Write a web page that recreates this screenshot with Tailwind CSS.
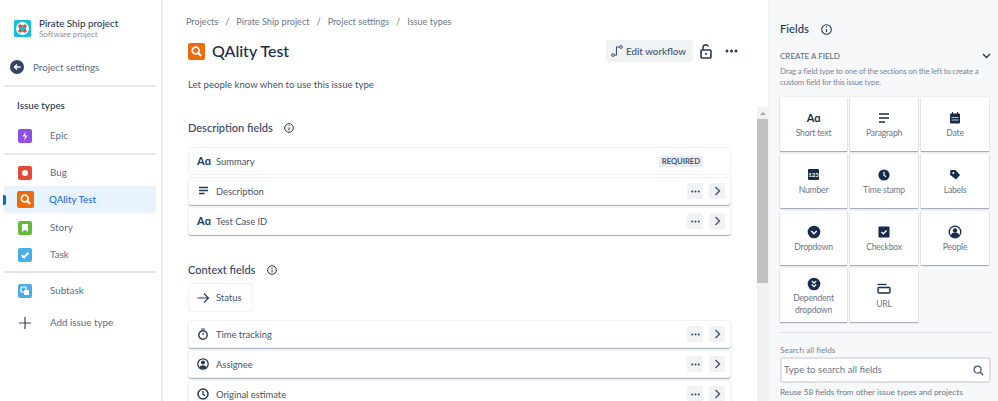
<!DOCTYPE html>
<html lang="en">
  <head>
    <meta charset="UTF-8" />
    <title>QAlity Test - Issue types</title>
    <script src="https://cdn.jsdelivr.net/npm/@tailwindcss/browser@4"></script>
  </head>
  <body class="w-[998px] h-[401px] overflow-hidden bg-white font-['Lato','Noto_Sans',sans-serif] text-[#44546f]">
    <div class="flex h-[401px]">
      <!-- left nav -->
      <nav class="w-[163px] h-full shrink-0 border-r-2 border-[#ebecf0] text-[9.8px] text-[#5e6c84]">
        <div class="flex items-center h-[17px] mt-[20px] pl-[14px] gap-[8px]">
          <svg width="17" height="17" viewBox="0 0 17 17" class="shrink-0">
            <rect width="17" height="17" rx="1.5" fill="#12c2dc" />
            <circle cx="8.5" cy="8.5" r="5" fill="none" stroke="#fff" stroke-width="3" />
            <path d="M5 5l2 2M12 5l-2 2M5 12l2-2M12 12l-2-2" stroke="#e5493a" stroke-width="3" />
          </svg>
          <div>
            <div class="text-[9.8px] leading-[12px] font-medium text-[#253858]">Pirate Ship project</div>
            <div class="text-[8.1px] leading-[11px] text-[#8993a4]">Software project</div>
          </div>
        </div>
        <div class="flex items-center h-[16px] mt-[22px] pl-[10px] gap-[9px]">
          <svg width="14" height="14" viewBox="0 0 14 14" class="shrink-0">
            <circle cx="7" cy="7" r="7" fill="#344563" />
            <path d="M10.5 7H4.5M7 4.5L4.5 7L7 9.5" fill="none" stroke="#fff" stroke-width="1.5" />
          </svg>
          <span>Project settings</span>
        </div>
        <div class="h-[2px] w-[152px] ml-[4px] mt-[10px] bg-[#e4e6ea]"></div>
        <div class="h-[16px] mt-[10px] pl-[17px] leading-[16px] font-medium text-[#253858]">Issue types</div>

        <div class="flex items-center h-[27px] mt-[9px] pl-[18px] gap-[18px]">
          <svg width="14" height="14" viewBox="0 0 14 14" class="shrink-0">
            <rect width="14" height="14" rx="2" fill="#904ee2" />
            <path d="M7.8 2.5L4.5 7.5H7L6.2 11.5L9.5 6.5H7z" fill="#fff" />
          </svg>
          <span>Epic</span>
        </div>
        <div class="h-[2px] w-[152px] ml-[4px] mt-[4px] bg-[#e4e6ea]"></div>

        <div class="flex items-center h-[27px] mt-[4px] pl-[18px] gap-[18px]">
          <svg width="14" height="14" viewBox="0 0 14 14" class="shrink-0">
            <rect width="14" height="14" rx="2" fill="#e5493a" />
            <circle cx="7" cy="7" r="3" fill="#fff" />
          </svg>
          <span>Bug</span>
        </div>
        <div class="relative flex items-center h-[27px] w-[152px] ml-[4px] mb-[1px] pl-[13px] gap-[15px] rounded-[3px] bg-[#e9f2ff] text-[#0c66e4]">
          <span class="absolute left-[-1px] top-[9px] h-[10px] w-[3px] rounded-r-[2px] bg-[#0c66e4]"></span>
          <svg width="17" height="17" viewBox="0 0 17 17" class="shrink-0">
            <rect width="17" height="17" rx="2" fill="#ef6a0b" />
            <circle cx="7.7" cy="7.5" r="3.4" fill="none" stroke="#fff" stroke-width="1.8" />
            <path d="M10.2 10l3 3" stroke="#fff" stroke-width="2" />
          </svg>
          <span>QAlity Test</span>
        </div>
        <div class="flex items-center h-[27px] pl-[18px] gap-[18px]">
          <svg width="14" height="14" viewBox="0 0 14 14" class="shrink-0">
            <rect width="14" height="14" rx="2" fill="#63ba3c" />
            <path d="M4 3h6v8L7 8.8L4 11z" fill="#fff" />
          </svg>
          <span>Story</span>
        </div>
        <div class="flex items-center h-[27px] pl-[18px] gap-[18px]">
          <svg width="14" height="14" viewBox="0 0 14 14" class="shrink-0">
            <rect width="14" height="14" rx="2" fill="#4bade8" />
            <path d="M3.8 7.2L6 9.4L10.4 4.8" fill="none" stroke="#fff" stroke-width="2" />
          </svg>
          <span>Task</span>
        </div>
        <div class="h-[2px] w-[152px] ml-[4px] mt-[3px] bg-[#e4e6ea]"></div>
        <div class="flex items-center h-[27px] mt-[4px] pl-[18px] gap-[18px]">
          <svg width="14" height="14" viewBox="0 0 14 14" class="shrink-0">
            <rect width="14" height="14" rx="2" fill="#4bade8" />
            <rect x="3" y="3" width="5" height="5" rx="0.8" fill="none" stroke="#fff" stroke-width="1.2" />
            <rect x="6" y="6" width="5" height="5" rx="0.8" fill="#fff" />
          </svg>
          <span>Subtask</span>
        </div>
        <div class="flex items-center h-[27px] mt-[5px] pl-[18px] gap-[18px]">
          <svg width="14" height="14" viewBox="0 0 14 14" class="shrink-0">
            <path d="M7 1v12M1 7h12" stroke="#344563" stroke-width="1.2" />
          </svg>
          <span>Add issue type</span>
        </div>
      </nav>

      <!-- main -->
      <main class="w-[594px] shrink-0 h-full overflow-hidden pl-[25px] pr-[26px]">
        <div class="flex items-center gap-[7px] h-[16px] mt-[14px] -ml-[2px] text-[9.1px] text-[#6b778c]">
          <span>Projects</span><span>/</span><span>Pirate Ship project</span><span>/</span><span>Project settings</span><span>/</span><span>Issue types</span>
        </div>
        <div class="flex items-center h-[24px] mt-[9px]">
          <svg width="17" height="17" viewBox="0 0 17 17" class="shrink-0">
            <rect width="17" height="17" rx="2" fill="#ef6a0b" />
            <circle cx="7.7" cy="7.5" r="3.4" fill="none" stroke="#fff" stroke-width="1.8" />
            <path d="M10.2 10l3 3" stroke="#fff" stroke-width="2" />
          </svg>
          <h1 class="ml-[7px] text-[16px] leading-[24px] font-medium text-[#172b4d]">QAlity Test</h1>
          <button class="flex items-center gap-[3px] ml-auto h-[22px] w-[87px] pl-[5px] rounded-[3px] bg-[#f1f2f4] text-[9.8px] font-medium text-[#44546f] whitespace-nowrap">
            <svg width="12" height="12" viewBox="0 0 12 12" class="shrink-0">
              <circle cx="2" cy="10" r="1.4" fill="none" stroke="#44546f" />
              <circle cx="10" cy="2" r="1.4" fill="none" stroke="#44546f" />
              <path d="M3.5 10H5.5V2H8.5" fill="none" stroke="#44546f" stroke-width="1.1" />
            </svg>
            Edit workflow
          </button>
          <svg width="12" height="15" viewBox="0 0 12 15" class="ml-[7px] shrink-0">
            <rect x="1" y="6" width="10" height="8" rx="1" fill="none" stroke="#253858" stroke-width="1.6" />
            <path d="M3 6V3.5a2.8 2.8 0 0 1 5.4-1" fill="none" stroke="#253858" stroke-width="1.5" />
            <circle cx="6" cy="10" r="1.1" fill="#253858" />
          </svg>
          <svg width="13" height="4" viewBox="0 0 13 4" class="ml-[13px] -mr-[7px] shrink-0">
            <circle cx="2" cy="2" r="1.5" fill="#253858" /><circle cx="6.5" cy="2" r="1.5" fill="#253858" /><circle cx="11" cy="2" r="1.5" fill="#253858" />
          </svg>
        </div>
        <p class="h-[16px] mt-[14px] text-[9.6px] leading-[16px] text-[#44546f]">Let people know when to use this issue type</p>

        <div class="flex items-center gap-[11px] h-[16px] mt-[27px] text-[11px] font-medium text-[#344563]">
          Description fields
          <svg width="10" height="10" viewBox="0 0 10 10"><circle cx="5" cy="5" r="4.3" fill="none" stroke="#253858" /><path d="M5 4.5v3M5 2.3v1" stroke="#253858" /></svg>
        </div>
        <div class="flex flex-col gap-[2px] mt-[11px]">
          <div class="flex items-center w-[543px] h-[28px] pl-[8px] pr-[27px] rounded-[3px] border border-[#f1f2f4] text-[9.4px]">
            <span class="w-[19px] text-[11px] font-bold text-[#253858]">Aɑ</span>
            <span class="pt-[2px]">Summary</span>
            <span class="ml-auto px-[3px] rounded-[2px] bg-[#ebecf0] text-[7.6px] leading-[11px] font-bold text-[#44546f]">REQUIRED</span>
          </div>
          <div class="flex items-center w-[543px] h-[28px] pl-[8px] pr-[5px] rounded-[3px] border border-[#f1f2f4] shadow-[0_1px_1px_#a5adba] text-[9.4px]">
            <svg width="12" height="12" viewBox="0 0 12 12" class="mx-[1px] shrink-0"><path d="M1 2.5h9M1 5.5h9M1 8.5h5.5" stroke="#253858" stroke-width="1.4" /></svg>
            <span class="ml-[5px] pt-[2px]">Description</span>
            <span class="flex items-center justify-center ml-auto w-[16px] h-[16px] rounded-[2px] bg-[#f1f2f4]"><svg width="9" height="3" viewBox="0 0 9 3"><circle cx="1.2" cy="1.5" r="1" fill="#344563" /><circle cx="4.5" cy="1.5" r="1" fill="#344563" /><circle cx="7.8" cy="1.5" r="1" fill="#344563" /></svg></span>
            <span class="flex items-center justify-center ml-[6px] w-[16px] h-[16px] rounded-[2px] bg-[#f1f2f4]"><svg width="7" height="10" viewBox="0 0 7 10"><path d="M1.5 1l4 4l-4 4" fill="none" stroke="#44546f" stroke-width="1.4" /></svg></span>
          </div>
          <div class="flex items-center w-[543px] h-[28px] pl-[8px] pr-[5px] rounded-[3px] border border-[#f1f2f4] shadow-[0_1px_1px_#a5adba] text-[9.4px]">
            <span class="w-[19px] text-[11px] font-bold text-[#253858]">Aɑ</span>
            <span class="pt-[2px]">Test Case ID</span>
            <span class="flex items-center justify-center ml-auto w-[16px] h-[16px] rounded-[2px] bg-[#f1f2f4]"><svg width="9" height="3" viewBox="0 0 9 3"><circle cx="1.2" cy="1.5" r="1" fill="#344563" /><circle cx="4.5" cy="1.5" r="1" fill="#344563" /><circle cx="7.8" cy="1.5" r="1" fill="#344563" /></svg></span>
            <span class="flex items-center justify-center ml-[6px] w-[16px] h-[16px] rounded-[2px] bg-[#f1f2f4]"><svg width="7" height="10" viewBox="0 0 7 10"><path d="M1.5 1l4 4l-4 4" fill="none" stroke="#44546f" stroke-width="1.4" /></svg></span>
          </div>
        </div>

        <div class="flex items-center gap-[12px] h-[16px] mt-[27px] text-[11px] font-medium text-[#344563]">
          Context fields
          <svg width="10" height="10" viewBox="0 0 10 10"><circle cx="5" cy="5" r="4.3" fill="none" stroke="#253858" /><path d="M5 4.5v3M5 2.3v1" stroke="#253858" /></svg>
        </div>
        <div class="flex items-center w-[65px] h-[29px] mt-[5px] pl-[8px] rounded-[3px] border border-[#f1f2f4] text-[9.4px]">
          <svg width="13" height="12" viewBox="0 0 13 12" class="shrink-0"><path d="M0.5 6h11M7 1.5L11.5 6L7 10.5" fill="none" stroke="#253858" stroke-width="1.1" /></svg>
          <span class="ml-[6px] pt-[1px]">Status</span>
        </div>
        <div class="flex flex-col gap-[2px] mt-[8px]">
          <div class="flex items-center w-[543px] h-[28px] pl-[8px] pr-[5px] rounded-[3px] border border-[#f1f2f4] shadow-[0_1px_1px_#a5adba] text-[9.4px]">
            <svg width="12" height="12" viewBox="0 0 12 12" class="shrink-0"><circle cx="6" cy="7" r="4.2" fill="none" stroke="#253858" stroke-width="1.4" /><path d="M4.2 1h3.6M6 7V4.8" stroke="#253858" stroke-width="1.2" /></svg>
            <span class="ml-[7px] pt-[2px]">Time tracking</span>
            <span class="flex items-center justify-center ml-auto w-[16px] h-[16px] rounded-[2px] bg-[#f1f2f4]"><svg width="9" height="3" viewBox="0 0 9 3"><circle cx="1.2" cy="1.5" r="1" fill="#344563" /><circle cx="4.5" cy="1.5" r="1" fill="#344563" /><circle cx="7.8" cy="1.5" r="1" fill="#344563" /></svg></span>
            <span class="flex items-center justify-center ml-[6px] w-[16px] h-[16px] rounded-[2px] bg-[#f1f2f4]"><svg width="7" height="10" viewBox="0 0 7 10"><path d="M1.5 1l4 4l-4 4" fill="none" stroke="#44546f" stroke-width="1.4" /></svg></span>
          </div>
          <div class="flex items-center w-[543px] h-[28px] pl-[8px] pr-[5px] rounded-[3px] border border-[#f1f2f4] shadow-[0_1px_1px_#a5adba] text-[9.4px]">
            <svg width="12" height="12" viewBox="0 0 12 12" class="shrink-0"><circle cx="6" cy="6" r="5.2" fill="none" stroke="#253858" stroke-width="1.3" /><circle cx="6" cy="4.6" r="2" fill="#253858" /><path d="M2.5 9.5a3.6 3 0 0 1 7 0a5 5 0 0 1-7 0" fill="#253858" /></svg>
            <span class="ml-[7px] pt-[2px]">Assignee</span>
            <span class="flex items-center justify-center ml-auto w-[16px] h-[16px] rounded-[2px] bg-[#f1f2f4]"><svg width="9" height="3" viewBox="0 0 9 3"><circle cx="1.2" cy="1.5" r="1" fill="#344563" /><circle cx="4.5" cy="1.5" r="1" fill="#344563" /><circle cx="7.8" cy="1.5" r="1" fill="#344563" /></svg></span>
            <span class="flex items-center justify-center ml-[6px] w-[16px] h-[16px] rounded-[2px] bg-[#f1f2f4]"><svg width="7" height="10" viewBox="0 0 7 10"><path d="M1.5 1l4 4l-4 4" fill="none" stroke="#44546f" stroke-width="1.4" /></svg></span>
          </div>
          <div class="flex items-center w-[543px] h-[28px] pl-[8px] pr-[5px] rounded-[3px] border border-[#f1f2f4] shadow-[0_1px_1px_#a5adba] text-[9.4px]">
            <svg width="12" height="12" viewBox="0 0 12 12" class="shrink-0"><circle cx="6" cy="6" r="5" fill="none" stroke="#253858" stroke-width="1.5" /><path d="M6 3v3.2l2 1.6" fill="none" stroke="#253858" stroke-width="1.3" /></svg>
            <span class="ml-[7px] pt-[2px]">Original estimate</span>
            <span class="flex items-center justify-center ml-auto w-[16px] h-[16px] rounded-[2px] bg-[#f1f2f4]"><svg width="9" height="3" viewBox="0 0 9 3"><circle cx="1.2" cy="1.5" r="1" fill="#344563" /><circle cx="4.5" cy="1.5" r="1" fill="#344563" /><circle cx="7.8" cy="1.5" r="1" fill="#344563" /></svg></span>
            <span class="flex items-center justify-center ml-[6px] w-[16px] h-[16px] rounded-[2px] bg-[#f1f2f4]"><svg width="7" height="10" viewBox="0 0 7 10"><path d="M1.5 1l4 4l-4 4" fill="none" stroke="#44546f" stroke-width="1.4" /></svg></span>
          </div>
        </div>
      </main>

      <!-- scrollbar -->
      <div class="w-[11px] shrink-0 h-full pt-[107px]">
        <div class="flex flex-col h-full bg-[#f1f1f1]">
          <div class="flex items-center justify-center h-[12px]"><div class="w-0 h-0 border-x-[3px] border-x-transparent border-b-[3px] border-b-[#a3a3a3]"></div></div>
          <div class="h-[164px] bg-[#c1c1c1]"></div>
        </div>
      </div>

      <!-- fields panel -->
      <aside class="flex-1 h-full bg-[#f7f8f9] pl-[11px] pr-[7px] border-l border-[#f1f2f4]">
        <div class="flex items-center gap-[12px] h-[20px] mt-[19px] text-[11.2px] font-medium text-[#253858]">
          Fields
          <svg width="11" height="11" viewBox="0 0 11 11"><circle cx="5.5" cy="5.5" r="4.8" fill="none" stroke="#253858" stroke-width="1.1" /><path d="M5.5 5v3M5.5 2.3v1.2" stroke="#253858" stroke-width="1.1" /></svg>
        </div>
        <div class="flex items-center justify-between h-[14px] mt-[10px] pr-[3px] text-[8px] font-medium text-[#5e6c84]">
          CREATE A FIELD
          <svg width="9" height="6" viewBox="0 0 9 6"><path d="M1 1l3.5 3.5L8 1" fill="none" stroke="#253858" stroke-width="1.4" /></svg>
        </div>
        <p class="mt-[3px] text-[7.9px] leading-[11px] tracking-[-0.2px] text-[#7a869a] w-[214px]">Drag a field type to one of the sections on the left to create a custom field for this issue type.</p>
        <div class="grid grid-cols-[67px_68px_68px] auto-rows-[54px] gap-x-[3px] gap-y-[3px] mt-[9px] text-[8.6px] tracking-[-0.2px] text-[#6b778c]">
          <div class="flex flex-col items-center pt-[14px] bg-white shadow-[0_1px_1px_#a5adba,0_0_1px_#c1c7d0]"><span class="h-[14px] text-[11px] leading-[14px] font-bold text-[#172b4d]">Aɑ</span><span class="mt-[2px]">Short text</span></div>
          <div class="flex flex-col items-center pt-[14px] bg-white shadow-[0_1px_1px_#a5adba,0_0_1px_#c1c7d0]"><svg width="14" height="14" viewBox="0 0 14 14"><path d="M2 3h10M2 7h10M2 11h6" stroke="#172b4d" stroke-width="1.5" /></svg><span class="mt-[2px]">Paragraph</span></div>
          <div class="flex flex-col items-center pt-[14px] bg-white shadow-[0_1px_1px_#a5adba,0_0_1px_#c1c7d0]"><svg width="14" height="14" viewBox="0 0 14 14"><rect x="2" y="2.5" width="10" height="10" rx="1" fill="#172b4d" /><path d="M4.5 1v2.5M9.5 1v2.5" stroke="#172b4d" /><path d="M3.5 6.5h7M3.5 9h7" stroke="#fff" stroke-width="0.7" /></svg><span class="mt-[2px]">Date</span></div>

          <div class="flex flex-col items-center pt-[14px] bg-white shadow-[0_1px_1px_#a5adba,0_0_1px_#c1c7d0]"><span class="flex items-center justify-center w-[11px] h-[11px] mt-[1px] mb-[2px] rounded-[1px] bg-[#172b4d] text-[6px] tracking-normal leading-none font-bold text-white">123</span><span class="mt-[2px]">Number</span></div>
          <div class="flex flex-col items-center pt-[14px] bg-white shadow-[0_1px_1px_#a5adba,0_0_1px_#c1c7d0]"><svg width="14" height="14" viewBox="0 0 14 14"><circle cx="7" cy="7" r="5.6" fill="#172b4d" /><path d="M7 3.8v3.4l2 1.6" fill="none" stroke="#fff" stroke-width="1.2" /></svg><span class="mt-[2px]">Time stamp</span></div>
          <div class="flex flex-col items-center pt-[14px] bg-white shadow-[0_1px_1px_#a5adba,0_0_1px_#c1c7d0]"><svg width="14" height="14" viewBox="0 0 14 14"><path d="M2.5 2h5l4.5 5l-4 4.5L2 6.8z" fill="#172b4d" /><circle cx="5.3" cy="5" r="1" fill="#fff" /></svg><span class="mt-[2px]">Labels</span></div>

          <div class="flex flex-col items-center pt-[14px] bg-white shadow-[0_1px_1px_#a5adba,0_0_1px_#c1c7d0]"><svg width="14" height="14" viewBox="0 0 14 14"><circle cx="7" cy="7" r="6.3" fill="#172b4d" /><path d="M4.3 6l2.7 2.7L9.7 6" fill="none" stroke="#fff" stroke-width="1.4" /></svg><span class="mt-[2px]">Dropdown</span></div>
          <div class="flex flex-col items-center pt-[14px] bg-white shadow-[0_1px_1px_#a5adba,0_0_1px_#c1c7d0]"><svg width="14" height="14" viewBox="0 0 14 14"><rect x="1.5" y="1.5" width="11" height="11" rx="1" fill="#172b4d" /><path d="M4.5 7l1.8 1.8L9.6 5.5" fill="none" stroke="#fff" stroke-width="1.3" /></svg><span class="mt-[2px]">Checkbox</span></div>
          <div class="flex flex-col items-center pt-[14px] bg-white shadow-[0_1px_1px_#a5adba,0_0_1px_#c1c7d0]"><svg width="14" height="14" viewBox="0 0 14 14"><circle cx="7" cy="7" r="5.8" fill="none" stroke="#172b4d" stroke-width="1.3" /><circle cx="7" cy="5.4" r="2.2" fill="#172b4d" /><path d="M3 10.8a4 3.2 0 0 1 8 0a5.8 5.8 0 0 1-8 0" fill="#172b4d" /></svg><span class="mt-[2px]">People</span></div>

          <div class="flex flex-col items-center pt-[9px] bg-white shadow-[0_1px_1px_#a5adba,0_0_1px_#c1c7d0] text-center leading-[12px]"><svg width="14" height="14" viewBox="0 0 14 14"><circle cx="7" cy="7" r="6.3" fill="#172b4d" /><path d="M4.8 4l2.2 2.2L9.2 4M4.8 7.5l2.2 2.2l2.2-2.2" fill="none" stroke="#fff" stroke-width="1.2" /></svg><span class="mt-[1px]">Dependent dropdown</span></div>
          <div class="flex flex-col items-center pt-[14px] bg-white shadow-[0_1px_1px_#a5adba,0_0_1px_#c1c7d0]"><svg width="14" height="14" viewBox="0 0 14 14"><path d="M0.5 2.5h9" stroke="#172b4d" stroke-width="1.3" /><rect x="1" y="5.5" width="12" height="5.5" rx="1" fill="none" stroke="#172b4d" stroke-width="1.4" /></svg><span class="mt-[2px]">URL</span></div>
        </div>
        <div class="h-[1px] w-[211px] mt-[10px] bg-[#dcdfe4]"></div>
        <div class="h-[12px] mt-[11px] text-[8.2px] leading-[12px] text-[#7a869a]">Search all fields</div>
        <div class="flex items-center justify-between w-[211px] h-[26px] mt-[1px] pl-[2px] pr-[5px] rounded-[3px] border-2 border-[#dfe1e6] bg-white text-[9.6px] text-[#6b778c]">
          Type to search all fields
          <svg width="11" height="11" viewBox="0 0 11 11"><circle cx="4.6" cy="4.6" r="3.5" fill="none" stroke="#44546f" stroke-width="1.2" /><path d="M7.2 7.2l3 3" stroke="#44546f" stroke-width="1.3" /></svg>
        </div>
        <div class="h-[12px] mt-[3px] text-[8.2px] leading-[12px] whitespace-nowrap text-[#6b778c]">Reuse 58 fields from other issue types and projects</div>
      </aside>
    </div>
  </body>
</html>
